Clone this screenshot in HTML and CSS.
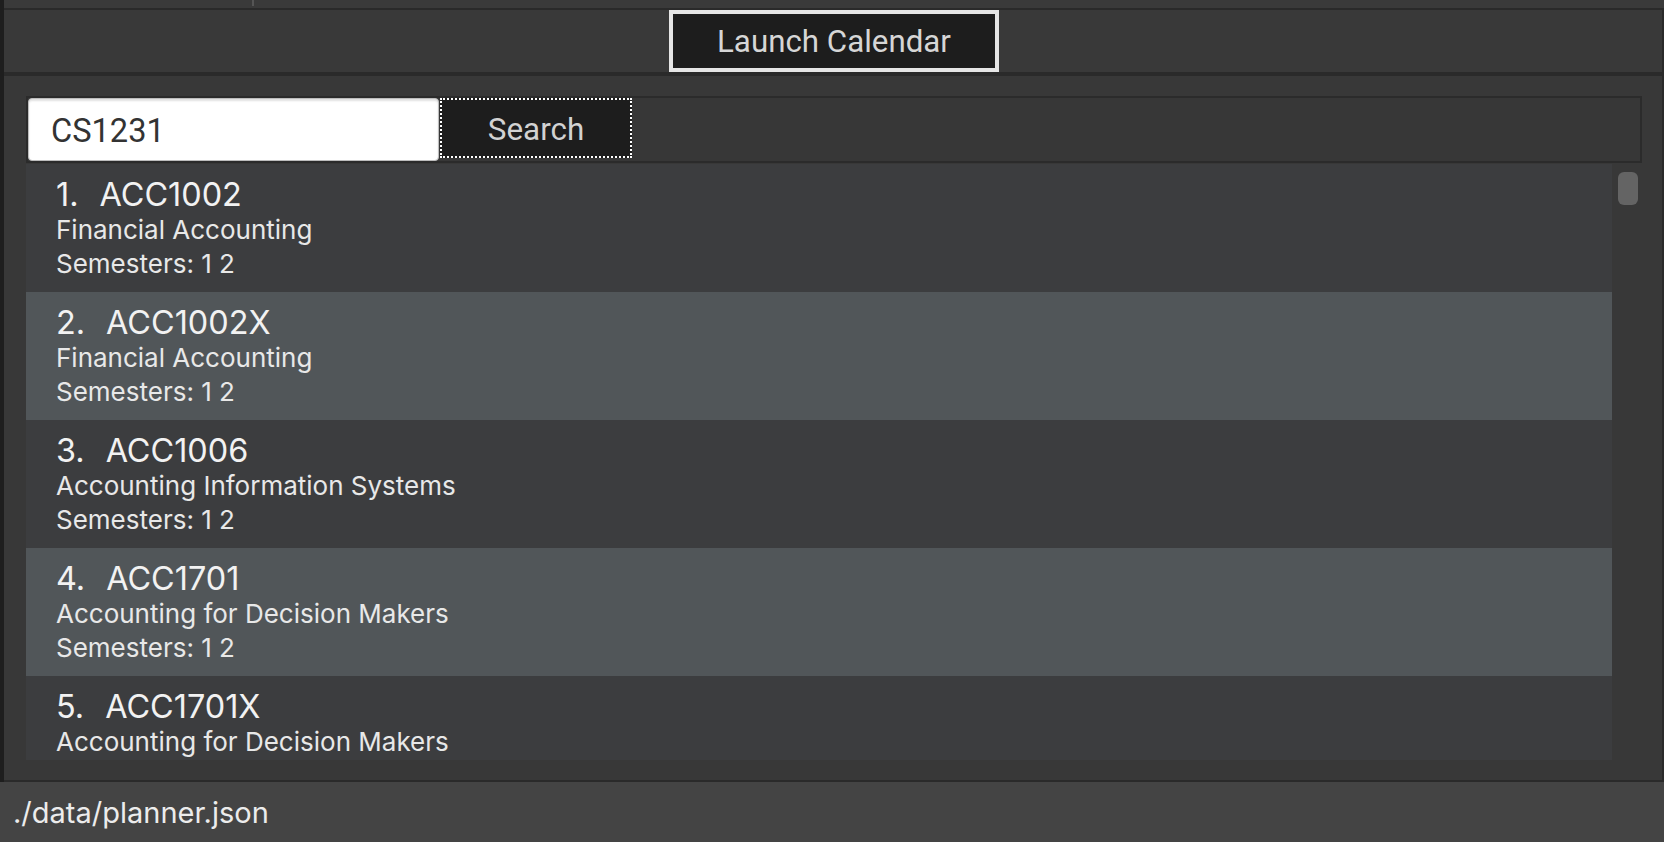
FILE: index.html
```html
<!DOCTYPE html>
<html>
<head>
<meta charset="utf-8">
<link rel="stylesheet" href="styles.css">
</head>
<body>
<div class="app">
  <div class="body-part">
    <div class="topstrip"><span class="tick"></span></div>
    <div class="bar"><button class="launch">Launch Calendar</button></div>
    <div class="main">
      <div class="searchrow">
        <input class="search-input" type="text" value="CS1231">
        <button class="search-btn">Search</button>
      </div>
      <div class="listwrap">
        <div class="list">
          <div class="item odd">
            <div class="title"><span class="num">1.</span><span>ACC1002</span></div>
            <div class="desc">Financial Accounting</div>
            <div class="desc">Semesters: 1 2</div>
          </div>
          <div class="item even">
            <div class="title"><span class="num">2.</span><span>ACC1002X</span></div>
            <div class="desc">Financial Accounting</div>
            <div class="desc">Semesters: 1 2</div>
          </div>
          <div class="item odd">
            <div class="title"><span class="num">3.</span><span>ACC1006</span></div>
            <div class="desc">Accounting Information Systems</div>
            <div class="desc">Semesters: 1 2</div>
          </div>
          <div class="item even">
            <div class="title"><span class="num">4.</span><span>ACC1701</span></div>
            <div class="desc">Accounting for Decision Makers</div>
            <div class="desc">Semesters: 1 2</div>
          </div>
          <div class="item odd">
            <div class="title"><span class="num">5.</span><span>ACC1701X</span></div>
            <div class="desc">Accounting for Decision Makers</div>
            <div class="desc">Semesters: 1 2</div>
          </div>
        </div>
        <div class="track"><div class="thumb"></div></div>
      </div>
    </div>
  </div>
  <div class="footer">./data/planner.json</div>
</div>
</body>
</html>
```

FILE: styles.css
```css
* { box-sizing: border-box; }
html, body { margin: 0; padding: 0; }
body {
  width: 1664px;
  height: 842px;
  overflow: hidden;
  background: #383838;
  font-family: "Inter", "Liberation Sans", sans-serif;
}
.app {
  display: flex;
  flex-direction: column;
  height: 842px;
}
.body-part {
  display: flex;
  flex-direction: column;
  border-left: 4px solid #1e1e1e;
}
.topstrip {
  height: 10px;
  background: #3a3a3a;
  border-bottom: 2px solid #2a2a2a;
  display: flex;
}
.tick {
  display: block;
  margin-left: 248px;
  width: 2px;
  height: 6px;
  background: #555555;
}
.bar {
  height: 66px;
  background: #393939;
  border-bottom: 4px solid #2a2a2a;
  border-right: 2px solid #2a2a2a;
  display: flex;
  justify-content: center;
}
.launch {
  margin: 0 0 0 2px;
  width: 330px;
  height: 62px;
  background: #1d1d1d;
  border: 4px solid #e6e6e6;
  color: #d6d6d6;
  font-family: "Roboto", "Liberation Sans", sans-serif;
  font-size: 31.3px;
  padding: 0;
  line-height: 52px;
  padding-top: 2px;
}
.main {
  padding: 20px 20px 20px 22px;
  border-right: 2px solid #2a2a2a;
  border-bottom: 2px solid #2a2a2a;
  display: flex;
  flex-direction: column;
  height: 706px;
}
.searchrow {
  height: 67px;
  border: 2px solid #2b2b2b;
  display: flex;
  align-items: flex-start;
  background: #373737;
}
.search-input {
  width: 411px;
  height: 63px;
  margin: 0;
  border: 1px solid #bdbdbd;
  border-radius: 4px;
  background: #ffffff;
  box-shadow: inset 0 2px 2px rgba(0,0,0,0.12);
  padding: 3px 0 0 22px;
  font-family: "Roboto", "Liberation Sans", sans-serif;
  font-size: 32.6px;
  color: #333333;
  outline: none;
}
.search-btn {
  margin: 0 0 0 1px;
  width: 192px;
  height: 60px;
  background: #1d1d1d;
  border: 2px dotted #ffffff;
  color: #d2d2d2;
  font-family: "Roboto", "Liberation Sans", sans-serif;
  font-size: 31.4px;
  padding: 0;
  padding-top: 2px;
}
.listwrap {
  margin-top: 1px;
  height: 596px;
  display: flex;
  margin-right: 2px;
}
.list {
  flex: 1;
  overflow: hidden;
  display: flex;
  flex-direction: column;
}
.item {
  flex: 0 0 128px;
  height: 128px;
  padding: 12px 0 0 30px;
  color: #ececec;
}
.odd { background: #3c3d3f; }
.even { background: #515659; }
.title {
  display: flex;
  gap: 21px;
  font-size: 32.4px;
  line-height: 37px;
  color: #f2f2f2;
}
.desc {
  font-size: 26px;
  line-height: 34px;
  color: #e8e8e8;
}
.track {
  width: 28px;
  background: #383838;
  padding: 8px 0 0 6px;
}
.thumb {
  width: 20px;
  height: 33px;
  border-radius: 6px;
  background: #646464;
}
.footer {
  flex: 1;
  background: #444444;
  color: #ececec;
  font-size: 29px;
  line-height: 60px;
  padding: 1px 0 0 13px;
}
```
